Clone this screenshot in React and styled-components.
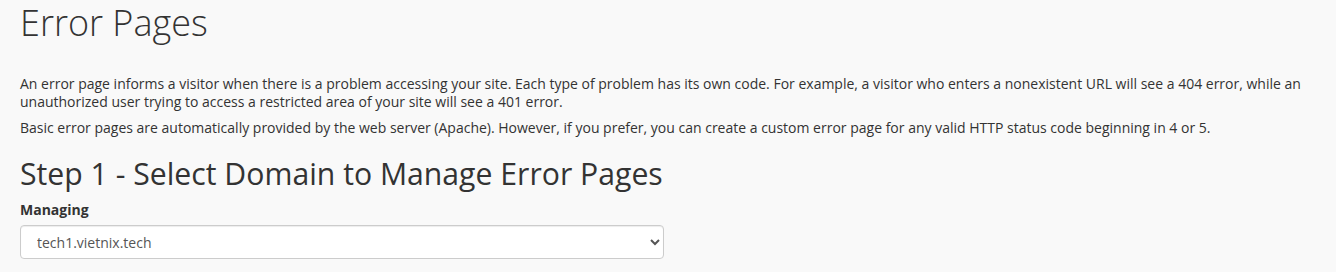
import React from 'react'
import styled, { createGlobalStyle } from 'styled-components'

const GlobalStyle = createGlobalStyle`
  html, body {
    margin: 0;
    padding: 0;
    background: #f9f9f9;
  }
  body {
    font-family: 'Open Sans', 'Liberation Sans', sans-serif;
    font-size: 14px;
    line-height: 1.42857;
    color: #333;
  }
`

const Page = styled.div`
  padding: 0 20px;
`

const Title = styled.h1`
  margin: 0;
  font-size: 36px;
  font-weight: 300;
  line-height: 46px;
  color: #333;
`

const Intro = styled.p`
  margin: ${(p) => (p.first ? '29px' : '0')} 0 8px;
  line-height: 18px;
`

const StepHeading = styled.h2`
  margin: 19px 0 8px;
  font-size: 30.2px;
  font-weight: 400;
  line-height: 36px;
  color: #333;
`

const Field = styled.div`
  display: flex;
  flex-direction: column;
  align-items: flex-start;
  gap: 5px;
`

const Label = styled.label`
  font-weight: 700;
  font-size: 14px;
  line-height: 20px;
`

const Select = styled.select`
  width: 644px;
  height: 34px;
  padding: 6px 12px;
  font-family: inherit;
  font-size: 14px;
  color: #555;
  background: #fff;
  border: 1px solid #ccc;
  border-radius: 4px;
  box-shadow: inset 0 1px 1px rgba(0, 0, 0, 0.075);
`

export default function App() {
  return (
    <>
      <GlobalStyle />
      <Page>
        <Title>Error Pages</Title>
        <Intro first>
          An error page informs a visitor when there is a problem accessing your site. Each type of
          problem has its own code. For example, a visitor who enters a nonexistent URL will see a 404
          error, while an unauthorized user trying to access a restricted area of your site will see a
          401 error.
        </Intro>
        <Intro>
          Basic error pages are automatically provided by the web server (Apache). However, if you
          prefer, you can create a custom error page for any valid HTTP status code beginning in 4 or 5.
        </Intro>
        <StepHeading>Step 1 - Select Domain to Manage Error Pages</StepHeading>
        <Field>
          <Label htmlFor="domain">Managing</Label>
          <Select id="domain" defaultValue="tech1.vietnix.tech">
            <option value="tech1.vietnix.tech">tech1.vietnix.tech</option>
          </Select>
        </Field>
      </Page>
    </>
  )
}
